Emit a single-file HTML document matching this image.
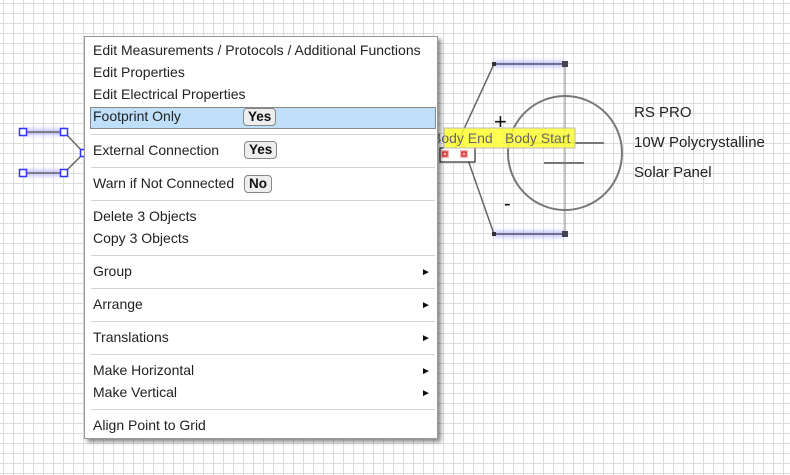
<!DOCTYPE html>
<html><head><style>
body{margin:0;width:790px;height:475px;overflow:hidden;background:#fff;
background-image:linear-gradient(to right,#dcdcdc 1px,transparent 1px),linear-gradient(to bottom,#dcdcdc 1px,transparent 1px);
background-size:10px 10px;background-position:3px 3px;font-family:"Liberation Sans",Arial,sans-serif;position:relative}
.menu{position:absolute;left:84px;top:36px;width:352px;height:401px;background:#fff;border:1px solid #999;box-shadow:3px 3px 4px rgba(0,0,0,.45)}
.it{position:absolute;left:8px;font-size:14px;color:#222;line-height:16px;white-space:nowrap;margin-top:-1px}
.sep{position:absolute;left:6px;right:2px;height:1px;background:#d4d4d4}
.hl{position:absolute;left:5px;right:1px;top:70px;height:20px;background:#bfdffb;border:1px solid #888}
.b{position:absolute;font-size:13.5px;font-weight:bold;background:#eee;border:1px solid #888;border-radius:4px;padding:0 4px;line-height:16px;color:#111}
.ar{position:absolute;left:336px;font-size:10px;color:#111;margin-top:1px}
.lbl{position:absolute;font-size:15px;color:#222;white-space:nowrap}
</style></head><body>
<svg width="790" height="475" style="position:absolute;left:0;top:0">
<defs><filter id="gl"><feGaussianBlur stdDeviation="2"/></filter></defs>
<g stroke="#99f" stroke-width="6" fill="none" filter="url(#gl)" opacity=".6">
<line x1="23" y1="132" x2="64" y2="132"/><line x1="23" y1="173" x2="64" y2="173"/>
<line x1="494" y1="64" x2="565" y2="64"/><line x1="494" y1="234" x2="565" y2="234"/></g>
<g stroke="#666" stroke-width="1.5" fill="none">
<line x1="23" y1="132" x2="64" y2="132"/><line x1="64" y1="132" x2="84" y2="153"/>
<line x1="23" y1="173" x2="64" y2="173"/><line x1="64" y1="173" x2="84" y2="153"/>
<line x1="494" y1="64" x2="565" y2="64" stroke="#556"/><line x1="494" y1="234" x2="565" y2="234" stroke="#556"/>
<line x1="494" y1="64" x2="452" y2="155"/><line x1="494" y1="234" x2="468" y2="160"/>
<line x1="565" y1="64" x2="565" y2="234" stroke="#888" stroke-width="1"/>
<circle cx="565" cy="153" r="57" stroke="#777" stroke-width="2"/>
<line x1="530" y1="143" x2="604" y2="143" stroke="#777" stroke-width="2"/>
<line x1="544" y1="163" x2="584" y2="163" stroke="#777" stroke-width="2"/>
</g>
<g fill="#fff" stroke="#33f" stroke-width="1.5">
<rect x="19.5" y="128.5" width="7" height="7"/><rect x="60.5" y="128.5" width="7" height="7"/>
<rect x="19.5" y="169.5" width="7" height="7"/><rect x="60.5" y="169.5" width="7" height="7"/>
<rect x="80.5" y="149.5" width="7" height="7"/></g>
<rect x="492" y="62" width="4" height="4" fill="#333"/><rect x="562" y="61" width="6" height="6" fill="#445"/>
<rect x="492" y="232" width="4" height="4" fill="#333"/><rect x="562" y="231" width="6" height="6" fill="#445"/>
<rect x="440" y="148" width="35" height="14" fill="#fff" stroke="#000"/>
<rect x="441" y="150" width="8" height="8" fill="#f4b0b0"/><rect x="460" y="150" width="8" height="8" fill="#f4b0b0"/>
<rect x="443" y="152" width="4" height="4" fill="none" stroke="#c00"/><rect x="462" y="152" width="4" height="4" fill="none" stroke="#c00"/>
<rect x="444" y="128" width="131" height="20" fill="#ffff33" fill-opacity=".85" stroke="#bbb"/>
<text x="432" y="143" font-size="14" fill="#666" font-family="Liberation Sans">Body End</text>
<text x="505" y="143" font-size="14" fill="#666" font-family="Liberation Sans">Body Start</text>
<text x="494" y="129" font-size="22" fill="#111" font-family="Liberation Sans">+</text>
<text x="504" y="210" font-size="20" fill="#111" font-family="Liberation Sans">-</text>
</svg>
<div class="lbl" style="left:634px;top:104px">RS PRO</div>
<div class="lbl" style="left:634px;top:134px">10W Polycrystalline</div>
<div class="lbl" style="left:634px;top:164px">Solar Panel</div>
<div class="menu">
<div class="hl"></div>
<div class="it" style="top:6px">Edit Measurements / Protocols / Additional Functions</div>
<div class="it" style="top:28px">Edit Properties</div>
<div class="it" style="top:50px">Edit Electrical Properties</div>
<div class="it" style="top:72px">Footprint Only</div><div class="b" style="left:158px;top:71px">Yes</div>
<div class="sep" style="top:97px"></div>
<div class="it" style="top:106px">External Connection</div><div class="b" style="left:159px;top:104px">Yes</div>
<div class="sep" style="top:130px"></div>
<div class="it" style="top:139px">Warn if Not Connected</div><div class="b" style="left:159px;top:138px">No</div>
<div class="sep" style="top:163px"></div>
<div class="it" style="top:172px">Delete 3 Objects</div>
<div class="it" style="top:194px">Copy 3 Objects</div>
<div class="sep" style="top:218px"></div>
<div class="it" style="top:227px">Group</div><div class="ar" style="top:229px">►</div>
<div class="sep" style="top:251px"></div>
<div class="it" style="top:260px">Arrange</div><div class="ar" style="top:262px">►</div>
<div class="sep" style="top:284px"></div>
<div class="it" style="top:293px">Translations</div><div class="ar" style="top:295px">►</div>
<div class="sep" style="top:317px"></div>
<div class="it" style="top:326px">Make Horizontal</div><div class="ar" style="top:328px">►</div>
<div class="it" style="top:348px">Make Vertical</div><div class="ar" style="top:350px">►</div>
<div class="sep" style="top:372px"></div>
<div class="it" style="top:381px">Align Point to Grid</div>
</div>
</body></html>
